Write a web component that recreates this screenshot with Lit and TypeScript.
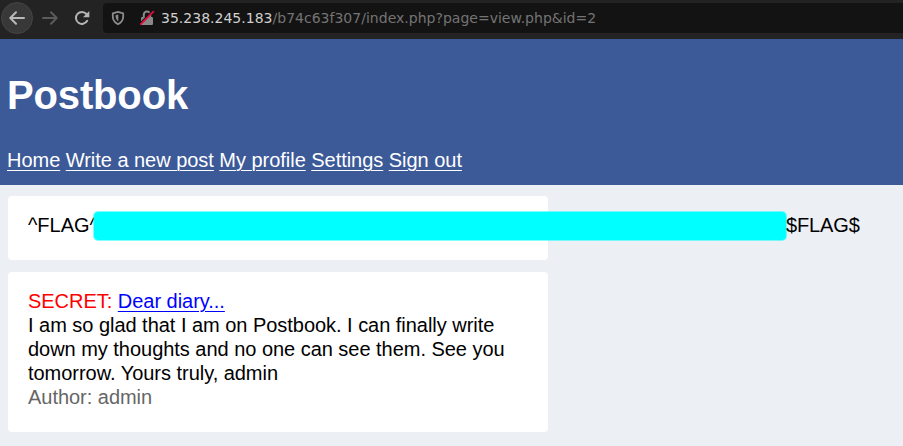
import { LitElement, html, css } from "lit";
import { customElement } from "lit/decorators.js";

@customElement("browser-bar")
class BrowserBar extends LitElement {
  static styles = css`
    :host { display: flex; align-items: center; box-sizing: border-box; height: 39px; padding: 0 0 3px 1px; background: #232323; }
    svg { display: block; fill: none; flex: none; }
    .back { box-sizing: border-box; width: 32px; height: 32px; border-radius: 50%; background: #383838; border: 1px solid #444; padding: 7px; flex: none; }
    .forward { margin-left: 9px; }
    .reload { margin-left: 16px; }
    .address { box-sizing: border-box; display: flex; align-items: center; flex: 1; height: 30px; margin-left: 13px; padding-left: 7px; border-radius: 4px 0 0 4px; background: #131313; white-space: nowrap; font: 14px/30px "DejaVu Sans", sans-serif; letter-spacing: 0.012px; color: #747474; }
    .lock { margin-left: 13px; }
    .url { margin-left: 6px; }
    .host { color: #d0d0d0; }
  `;
  render() {
    return html`
      <div class="back">
        <svg width="16" height="16" viewBox="0 0 16 16" stroke="#b8b8b8" stroke-width="2" stroke-linecap="round" stroke-linejoin="round"><path d="M15 8H1.5M7 2.3L1.3 8 7 13.7" /></svg>
      </div>
      <svg class="forward" width="16" height="16" viewBox="0 0 16 16" stroke="#5b5b5b" stroke-width="2" stroke-linecap="round" stroke-linejoin="round"><path d="M1 8h13.5M9 2.3L14.7 8 9 13.7" /></svg>
      <svg class="reload" width="16" height="16" viewBox="0 0 16 16" stroke="#b5b5b5" stroke-width="2" stroke-linecap="round"><path d="M13.2 10.8A6 6 0 1 1 12.5 4" /><path d="M15.3 1v6.3H9z" fill="#b5b5b5" stroke="none" /></svg>
      <div class="address">
        <svg width="16" height="16" viewBox="0 0 16 16"><path d="M8 1.9l5.2 1.4v3.2c0 3.5-1.8 6-5.2 7.7-3.4-1.7-5.2-4.2-5.2-7.7V3.3z" stroke="#8b8b8b" stroke-width="1.8" stroke-linejoin="round" /><path d="M8.3 4.6v6.9C6.4 10 5.6 8.4 5.6 6.3v-1z" fill="#8b8b8b" /></svg>
        <svg class="lock" width="16" height="16" viewBox="0 0 16 16"><path d="M4.8 8V4.8a3.2 3.2 0 0 1 6.4 0V8" stroke="#898989" stroke-width="2" /><rect x="2" y="7" width="12" height="8" rx="1.2" fill="#898989" /><path d="M13.5 .9L.9 13.5" stroke="#131313" stroke-width="1.5" /><path d="M14.4 1.6L1.8 14.2" stroke="#e50b3a" stroke-width="1.8" stroke-linecap="round" /></svg>
        <div class="url"><span class="host">35.238.245.183</span>/b74c63f307/index.php?page=view.php&amp;id=2</div>
      </div>
    `;
  }
}

@customElement("app-root")
class AppRoot extends LitElement {
  static styles = css`
    :host { display: block; height: 446px; overflow: hidden; background: #eceff4; color: #000; font: 20px/24px "Liberation Sans", Arial, sans-serif; letter-spacing: -0.03px; }
    header { box-sizing: border-box; height: 146px; padding: 32px 7px 0; background: #3c5998; color: #fff; }
    h1 { margin: 0; font-size: 40px; line-height: 48px; width: max-content; letter-spacing: -0.15px; }
    nav { margin-top: 29px; display: flex; gap: 5.5px; white-space: nowrap; }
    a { text-decoration: underline; text-decoration-thickness: 1px; text-underline-offset: 3px; }
    nav a { color: #fff; }
    main { padding: 11px 8px 0; display: grid; gap: 12px; grid-template-columns: 540px; }
    .card { box-sizing: border-box; background: #fff; border-radius: 4px; padding: 17px 20px 0; white-space: nowrap; }
    .flag { height: 64px; display: flex; align-items: flex-start; }
    .lead { width: 65px; flex: none; }
    .mask { position: relative; box-sizing: border-box; flex: none; width: 694px; height: 30px; margin-top: -2px; border: 1px solid rgba(0, 255, 255, 0.5); background: #00ffff padding-box; border-radius: 5px; }
    .tail { position: relative; margin-left: -1px; letter-spacing: -0.12px; }
    .post { height: 160px; }
    .secret { color: #f00; }
    .post a { color: #00f; }
    .author { color: #666; }
  `;
  render() {
    return html`
      <browser-bar></browser-bar>
      <header>
        <h1>Postbook</h1>
        <nav>
          ${["Home", "Write a new post", "My profile", "Settings", "Sign out"].map((t) => html`<a>${t}</a>`)}
        </nav>
      </header>
      <main>
        <div class="card flag"><span class="lead">^FLAG^</span><span class="mask"></span><span class="tail">$FLAG$</span></div>
        <div class="card post">
          <div><span class="secret">SECRET:</span> <a>Dear diary...</a></div>
          <div>I am so glad that I am on Postbook. I can finally write</div>
          <div>down my thoughts and no one can see them. See you</div>
          <div>tomorrow. Yours truly, admin</div>
          <div class="author">Author: admin</div>
        </div>
      </main>
    `;
  }
}
